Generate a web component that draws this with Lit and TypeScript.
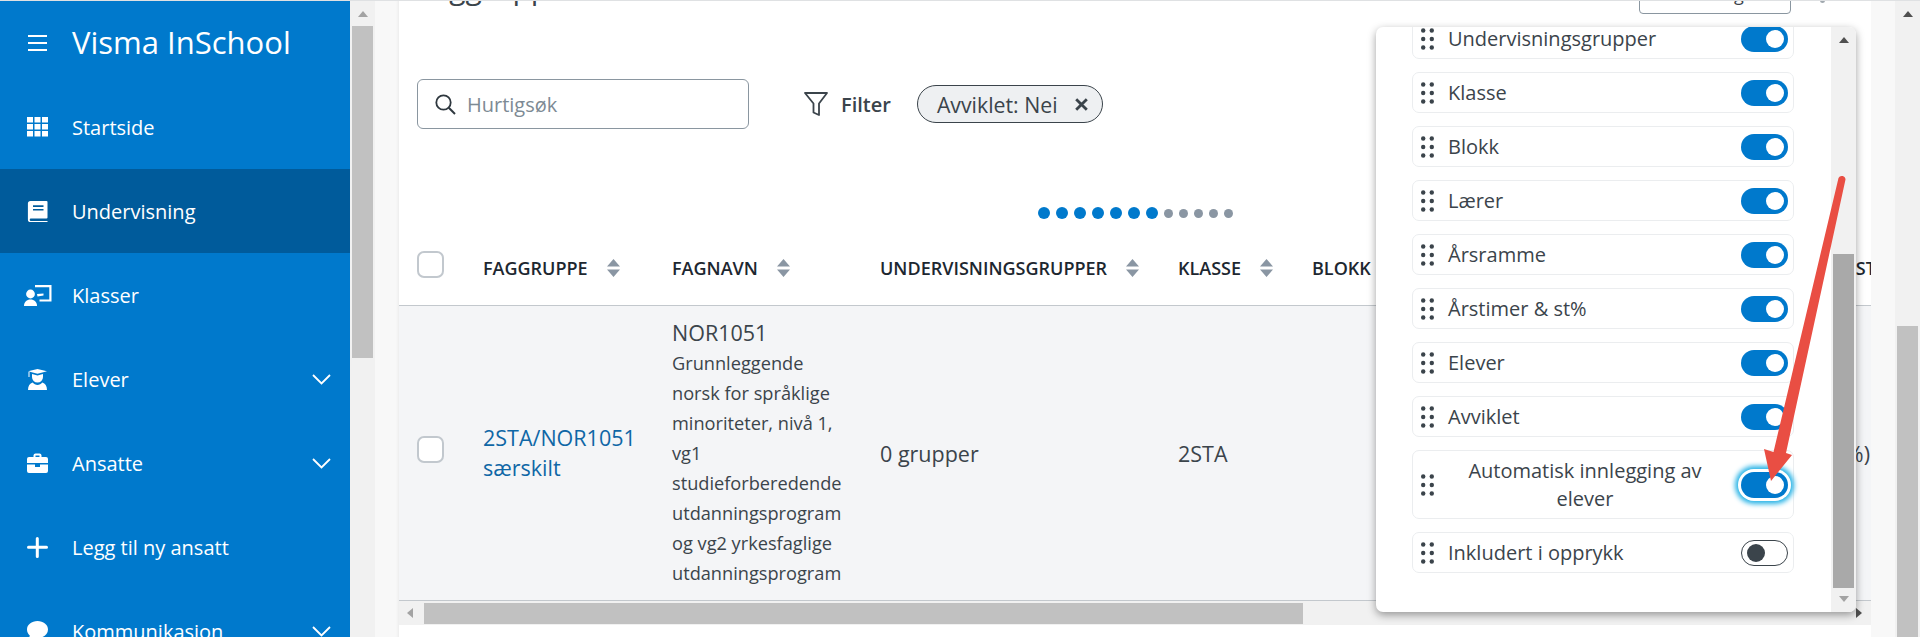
import { LitElement, html, css, svg } from "lit";
import { customElement } from "lit/decorators.js";

const navItems = [
  { label: "Startside", icon: "grid" },
  { label: "Undervisning", icon: "book", active: true },
  { label: "Klasser", icon: "board" },
  { label: "Elever", icon: "student", chevron: true },
  { label: "Ansatte", icon: "case", chevron: true },
  { label: "Legg til ny ansatt", icon: "plus" },
  { label: "Kommunikasjon", icon: "chat", chevron: true },
];

const icons: Record<string, any> = {
  grid: svg`<path fill="#fff" d="M0 0h6v5.600H0zM7.500 0h6v5.600h-6zM15 0h6v5.600h-6zM0 7h6v5.600H0zM7.500 7h6v5.600h-6zM15 7h6v5.600h-6zM0 14h6v5.600H0zM7.500 14h6v5.600h-6zM15 14h6v5.600h-6z"/>`,
  book: svg`<path fill="#fff" fill-rule="evenodd" d="M3.500 0h16a1 1 0 0 1 1 1v15.500a1 1 0 0 1-1 1H3.900a1.200 1.200 0 0 0 0 2.400h16.600V21H3.500a2.600 2.600 0 0 1-2.600-2.600V2.600A2.600 2.600 0 0 1 3.500 0zM6 4.200v1.700h10.500V4.200zM6 7.900v1.700h10.500V7.900z"/>`,
  board: svg`<g fill="#fff" transform="translate(-3 0)"><circle cx="6.500" cy="9" r="4.400"/><path d="M0 21c0-4.200 2.800-6.600 6.500-6.600S13 16.800 13 21z"/><path d="M11 0h16.500v16.500h-12v-2h9.800V2.200H11z"/><path d="M13 9l6.500-.6v2.200l-6 .8z"/></g>`,
  student: svg`<g fill="#fff"><path d="M1 2.200L10.500 0 20 2.200l-9.500 2.600z"/><path d="M1.500 3v5h1V3z"/><path d="M5 5l5.500 1.400L16 5v3a5.500 5.500 0 0 1-11 0z"/><path d="M1 21c0-4 1.800-6.600 4.700-7.400 1.200 1.400 2.900 2.300 4.800 2.300s3.600-.9 4.800-2.300C18.200 14.400 20 17 20 21z"/></g>`,
  case: svg`<g fill="#fff"><path fill-rule="evenodd" d="M6.500 4V2.200A2 2 0 0 1 8.500.4h4a2 2 0 0 1 2 1.800V4H19a2 2 0 0 1 2 2v4H0V6a2 2 0 0 1 2-2zm2-1.600V4h4V2.400z"/><path d="M0 11.500h8v2.500h5v-2.500h8V18a2 2 0 0 1-2 2H2a2 2 0 0 1-2-2z"/></g>`,
  plus: svg`<path fill="#fff" d="M8.800 1.500a1.500 1.500 0 0 1 3 0v7.300h7.700a1.500 1.500 0 0 1 0 3h-7.700v7.700a1.500 1.500 0 0 1-3 0v-7.700H1.500a1.500 1.500 0 0 1 0-3h7.300z"/>`,
  chat: svg`<path fill="#fff" d="M10.500 0C16.300 0 21 3.600 21 8.500S16.300 17 10.500 17c-1.400 0-2.700-.2-3.900-.6L1.500 20l1.300-5.600C1 12.900 0 10.800 0 8.500 0 3.600 4.700 0 10.500 0z"/>`,
};

const toggles = [
  { label: "Undervisningsgrupper", on: true },
  { label: "Klasse", on: true },
  { label: "Blokk", on: true },
  { label: "Lærer", on: true },
  { label: "Årsramme", on: true },
  { label: "Årstimer & st%", on: true },
  { label: "Elever", on: true },
  { label: "Avviklet", on: true },
  { label: "Automatisk innlegging av elever", on: true, focus: true, tall: true },
  { label: "Inkludert i opprykk", on: false },
];

const descLines = [
  "Grunnleggende",
  "norsk for språklige",
  "minoriteter, nivå 1,",
  "vg1",
  "studieforberedende",
  "utdanningsprogram",
  "og vg2 yrkesfaglige",
  "utdanningsprogram",
];

@customElement("app-root")
export class AppRoot extends LitElement {
  static styles = css`
    :host {
      display: block;
      width: 1920px;
      height: 637px;
      overflow: hidden;
      font-family: "Open Sans", "Noto Sans", sans-serif;
      color: #3b444b;
      font-size: 20px;
      background: #f8f8f8;
    }
    * { box-sizing: border-box; }
    .shell {
      position: relative;
      display: flex;
      height: 637px;
      border-top: 1px solid #dfe1e3;
      overflow: hidden;
    }
    .sidebar {
      flex: 0 0 350px;
      background: #0079cc;
      color: #fff;
      overflow: hidden;
    }
    .brand {
      display: flex;
      align-items: center;
      height: 84px;
      padding-left: 28px;
      gap: 25px;
      font-size: 31px;
      line-height: 1;
      padding-bottom: 1px;
    }
    .nav {
      display: flex;
      align-items: center;
      height: 84px;
      padding-left: 27px;
      padding-right: 19px;
    }
    .nav.active { background: #005b9b; }
    .nav svg.ico { width: 27px; height: 21px; flex: 0 0 27px; overflow: visible; }
    .nav .label { margin-left: 18px; flex: 1; white-space: nowrap; }
    .chev { width: 19px; height: 11px; }

    .vbar {
      flex: 0 0 25px;
      background: #f1f1f1;
      display: flex;
      flex-direction: column;
      align-items: center;
    }
    .arrow-up {
      margin-top: 10px;
      width: 0; height: 0;
      border-left: 5.500px solid transparent;
      border-right: 5.500px solid transparent;
      border-bottom: 6px solid #a3a3a3;
    }
    .arrow-up.dark { border-bottom-color: #505050; }
    .vthumb {
      flex: none;
      width: 21px;
      height: 332px;
      margin-top: 9px;
      background: #c1c1c1;
    }
    .vthumb.long {
      height: 320px;
      margin-top: 309px;
    }
    .gutter { flex: 0 0 24px; box-shadow: inset -3px 0 3px -2px rgba(0,0,0,.06); }
    .gutter.r { box-shadow: none; }

    .card {
      flex: 0 0 1472px;
      background: #fff;
      overflow: hidden;
      display: flex;
      flex-direction: column;
    }
    .head {
      height: 13px;
      flex: none;
      display: flex;
      align-items: flex-end;
      padding-left: 18px;
    }
    .head h1 {
      margin: 0 0 6px;
      font-size: 30px;
      font-weight: 400;
      line-height: 40px;
      color: #3b444b;
      flex: 0 0 1222px;
    }
    .head .btn {
      flex: 0 0 152px;
      height: 40px;
      border: 1px solid #8a96a0;
      border-radius: 0 0 4px 4px;
      display: flex;
      align-items: center;
      justify-content: center;
      font-size: 18px;
      color: #3b444b;
    }
    .head .more {
      margin-left: 29px;
      margin-bottom: 11px;
      width: 5px;
      height: 5px;
      border-radius: 50%;
      background: #a0a8ae;
    }
    .tools {
      margin-top: 65px;
      padding-left: 18px;
      display: flex;
      align-items: center;
      height: 50px;
      flex: none;
    }
    .search {
      width: 332px;
      height: 50px;
      border: 1px solid #8a96a0;
      border-radius: 6px;
      display: flex;
      align-items: center;
      padding-left: 17px;
      gap: 11px;
      color: #7d8a94;
    }
    .filter {
      margin-left: 55px;
      display: flex;
      align-items: center;
      gap: 13px;
      font-weight: 600;
    }
    .chip {
      margin-left: 26px;
      height: 38px;
      width: 186px;
      border: 1px solid #3b444b;
      border-radius: 19px;
      background: #eef0f2;
      display: flex;
      align-items: center;
      padding-left: 19px;
      gap: 17px;
      white-space: nowrap;
      font-size: 21.300px;
    }
    .dots {
      margin-top: 78px;
      margin-left: 639px;
      height: 12px;
      flex: none;
      display: flex;
      align-items: center;
      gap: 6px;
    }
    .dot { width: 12px; height: 12px; border-radius: 50%; background: #0079cc; flex: none; }
    .dot.g { width: 9px; height: 9px; background: #8a96a3; }
    .cols {
      display: grid;
      grid-template-columns: 66px 189px 208px 298px 134px 434px 124px;
      padding-left: 18px;
      align-items: center;
      white-space: nowrap;
      flex: none;
    }
    .thead {
      margin-top: 12px;
      height: 75px;
      border-bottom: 1px solid #c3c8cd;
      font-size: 18px;
      font-weight: 600;
      color: #1d2730;
    }
    .th { display: flex; align-items: center; gap: 19px; }
    .sort { width: 13px; height: 18px; flex: none; }
    .check {
      width: 27px;
      height: 27px;
      border: 2px solid #c2c8ce;
      border-radius: 7px;
      background: #fff;
      margin-bottom: 8px;
    }
    .tbody {
      height: 295px;
      background: #f4f5f7;
      border-bottom: 1px solid #c3c8cd;
      font-size: 21.500px;
    }
    .link { color: #0f67a6; white-space: normal; line-height: 30px; }
    .name { line-height: 30px; }
    .name .code { margin-top: -1px; }
    .name .desc { font-size: 18.200px; line-height: 30px; }
    .end { text-align: right; }
    .hbar {
      height: 24px;
      flex: none;
      background: #f1f1f1;
      display: flex;
      align-items: center;
    }
    .arrow-left {
      margin-left: 8px;
      width: 0; height: 0;
      border-top: 5.500px solid transparent;
      border-bottom: 5.500px solid transparent;
      border-right: 6px solid #a3a3a3;
    }
    .hthumb { margin-left: 11px; width: 879px; height: 21px; background: #c1c1c1; }
    .arrow-right {
      margin-left: 553px;
      width: 0; height: 0;
      border-top: 5.500px solid transparent;
      border-bottom: 5.500px solid transparent;
      border-left: 6px solid #505050;
    }

    .popup {
      position: absolute;
      left: 1376px;
      top: 26px;
      width: 480px;
      height: 585px;
      background: #fff;
      border-radius: 7px;
      box-shadow: 0 3px 9px rgba(0,0,0,.38);
      display: flex;
      overflow: hidden;
    }
    .plist {
      flex: 0 0 455px;
      padding-left: 36px;
      padding-right: 37px;
      margin-top: -9px;
      display: flex;
      flex-direction: column;
      gap: 13px;
    }
    .prow {
      flex: 0 0 41px;
      border: 1px solid #ebedef;
      border-radius: 7px;
      display: flex;
      align-items: center;
      padding-left: 8px;
      padding-right: 5px;
    }
    .prow.tall { flex-basis: 69px; line-height: 28px; }
    .grip { width: 13px; height: 22px; flex: none; }
    .ptext { margin-left: 14px; margin-right: auto; text-align: center; }
    .prow.tall .ptext { margin-right: 19px; flex: 1; }
    .toggle {
      flex: 0 0 47px;
      height: 26px;
      border-radius: 13px;
      background: #0079cc;
      display: flex;
      align-items: center;
      justify-content: flex-end;
      padding-right: 4px;
    }
    .toggle i { width: 18px; height: 18px; border-radius: 50%; background: #fff; }
    .toggle.off {
      background: #fff;
      border: 1px solid #3b444b;
      justify-content: flex-start;
      padding-left: 5px;
    }
    .toggle.off i { background: #3b444b; }
    .toggle.focus { box-shadow: 0 0 0 3px #fff, 0 0 5px 6px #27b3e6; }
    .pbar {
      flex: 0 0 25px;
      background: #f1f1f1;
      display: flex;
      flex-direction: column;
      align-items: center;
    }
    .pbar .arrow-up { margin-top: 10px; }
    .pthumb { margin-top: 211px; flex: none; width: 21px; height: 334px; background: #a9a9a9; }
    .arrow-down {
      margin-top: 8px;
      width: 0; height: 0;
      border-left: 5.500px solid transparent;
      border-right: 5.500px solid transparent;
      border-top: 6px solid #a3a3a3;
    }
    .annot {
      position: absolute;
      left: 0;
      top: -1px;
      width: 1920px;
      height: 637px;
      pointer-events: none;
    }
  `;

  private sort() {
    return html`<svg class="sort" viewBox="0 0 13 18"><path fill="#8a96a3" d="M6.500 0L13 7.500H0zM6.500 18L0 10.500h13z"/></svg>`;
  }

  private grip() {
    return html`<svg class="grip" viewBox="0 0 13 22"><g fill="#3b444b">
      ${[2.500, 11, 19.500].map(
        (y) => svg`<circle cx="2.200" cy=${y} r="2.200"/><circle cx="10.800" cy=${y} r="2.200"/>`
      )}
    </g></svg>`;
  }

  render() {
    return html`
      <div class="shell">
        <aside class="sidebar">
          <div class="brand">
            <svg width="19" height="16" viewBox="0 0 19 16"><path fill="#fff" d="M0 0h19v2H0zM0 7h19v2H0zM0 14h19v2H0z"/></svg>
            <span>Visma InSchool</span>
          </div>
          ${navItems.map(
            (n) => html`<div class="nav ${n.active ? "active" : ""}">
              <svg class="ico" viewBox="0 0 27 21">${icons[n.icon]}</svg>
              <span class="label">${n.label}</span>
              ${n.chevron
                ? html`<svg class="chev" viewBox="0 0 19 11"><path d="M1 1l8.500 8.500L18 1" fill="none" stroke="#fff" stroke-width="1.800"/></svg>`
                : ""}
            </div>`
          )}
        </aside>
        <div class="vbar"><div class="arrow-up"></div><div class="vthumb"></div></div>
        <div class="gutter"></div>
        <main class="card">
          <div class="head">
            <h1>Faggrupper</h1>
            <div class="btn">Handlinger</div>
            <div class="more"></div>
          </div>
          <div class="tools">
            <div class="search">
              <svg width="21" height="21" viewBox="0 0 21 21"><circle cx="8.500" cy="8.500" r="7.200" fill="none" stroke="#2f383f" stroke-width="1.800"/><path d="M13.800 13.800L20 20" stroke="#2f383f" stroke-width="2" fill="none"/></svg>
              <span>Hurtigsøk</span>
            </div>
            <div class="filter">
              <svg width="24" height="24" viewBox="0 0 24 24"><path d="M1 1h22l-8 10.500V23l-5.500-2.500v-9z" fill="none" stroke="#3b444b" stroke-width="1.800" stroke-linejoin="round"/></svg>
              <span>Filter</span>
            </div>
            <div class="chip">
              <span>Avviklet: Nei</span>
              <svg width="13" height="13" viewBox="0 0 13 13"><path d="M1.200 1.200l10.600 10.600M11.800 1.200L1.200 11.800" stroke="#3b444b" stroke-width="2.800" fill="none"/></svg>
            </div>
          </div>
          <div class="dots">
            ${[0, 1, 2, 3, 4, 5, 6].map(() => html`<span class="dot"></span>`)}
            ${[0, 1, 2, 3, 4].map(() => html`<span class="dot g"></span>`)}
          </div>
          <div class="cols thead">
            <div class="check"></div>
            <div class="th">FAGGRUPPE ${this.sort()}</div>
            <div class="th">FAGNAVN ${this.sort()}</div>
            <div class="th">UNDERVISNINGSGRUPPER ${this.sort()}</div>
            <div class="th">KLASSE ${this.sort()}</div>
            <div class="th">BLOKK ${this.sort()}</div>
            <div class="th">ÅRSTIMER &amp; ST%</div>
          </div>
          <div class="cols tbody">
            <div class="check"></div>
            <div class="link">2STA/NOR1051<br />særskilt</div>
            <div class="name">
              <div class="code">NOR1051</div>
              <div class="desc">${descLines.map((l) => html`<div>${l}</div>`)}</div>
            </div>
            <div>0 grupper</div>
            <div>2STA</div>
            <div></div>
            <div class="end">0 (0%)</div>
          </div>
          <div class="hbar">
            <div class="arrow-left"></div>
            <div class="hthumb"></div>
            <div class="arrow-right"></div>
          </div>
        </main>
        <div class="gutter r"></div>
        <div class="vbar"><div class="arrow-up dark"></div><div class="vthumb long"></div></div>

        <section class="popup">
          <div class="plist">
            ${toggles.map(
              (t) => html`<div class="prow ${t.tall ? "tall" : ""}">
                ${this.grip()}
                <span class="ptext">${t.label}</span>
                <div class="toggle ${t.on ? "" : "off"} ${t.focus ? "focus" : ""}"><i></i></div>
              </div>`
            )}
          </div>
          <div class="pbar">
            <div class="arrow-up dark"></div>
            <div class="pthumb"></div>
            <div class="arrow-down"></div>
          </div>
        </section>

        <svg class="annot" viewBox="0 0 1920 637">
          <path fill="#e94e43" d="M1838.500 178a3.700 3.700 0 0 1 7 1.500L1786 453l6 2L1771 481l-7 -32 9.500 3z"/>
        </svg>
      </div>
    `;
  }
}
